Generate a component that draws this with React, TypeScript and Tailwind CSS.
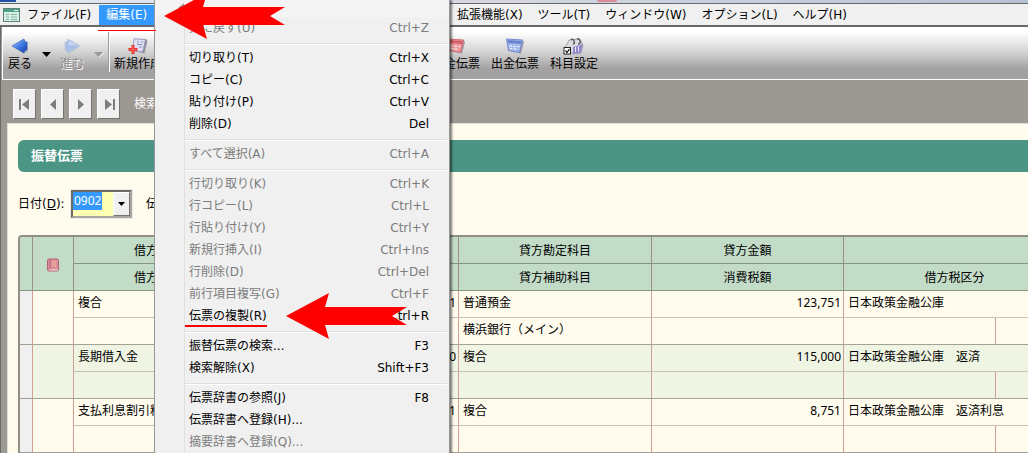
import type { ReactNode } from 'react';

type MenuEntry = { label: string; keys?: string; disabled?: boolean };

const editMenu: MenuEntry[][] = [
  [{ label: '元に戻す(U)', keys: 'Ctrl+Z', disabled: true }],
  [
    { label: '切り取り(T)', keys: 'Ctrl+X' },
    { label: 'コピー(C)', keys: 'Ctrl+C' },
    { label: '貼り付け(P)', keys: 'Ctrl+V' },
    { label: '削除(D)', keys: 'Del' },
  ],
  [{ label: 'すべて選択(A)', keys: 'Ctrl+A', disabled: true }],
  [
    { label: '行切り取り(K)', keys: 'Ctrl+K', disabled: true },
    { label: '行コピー(L)', keys: 'Ctrl+L', disabled: true },
    { label: '行貼り付け(Y)', keys: 'Ctrl+Y', disabled: true },
    { label: '新規行挿入(I)', keys: 'Ctrl+Ins', disabled: true },
    { label: '行削除(D)', keys: 'Ctrl+Del', disabled: true },
    { label: '前行項目複写(G)', keys: 'Ctrl+F', disabled: true },
    { label: '伝票の複製(R)', keys: 'Ctrl+R' },
  ],
  [
    { label: '振替伝票の検索...', keys: 'F3' },
    { label: '検索解除(X)', keys: 'Shift+F3' },
  ],
  [
    { label: '伝票辞書の参照(J)', keys: 'F8' },
    { label: '伝票辞書へ登録(H)...' },
    { label: '摘要辞書へ登録(Q)...', disabled: true },
  ],
];

const rows = [
  { debit: '複合', amount: '123,751', credit: '普通預金', sub: '横浜銀行（メイン）', note: '日本政策金融公庫' },
  { debit: '長期借入金', amount: '115,000', credit: '複合', sub: '', note: '日本政策金融公庫　返済' },
  { debit: '支払利息割引料', amount: '8,751', credit: '複合', sub: '', note: '日本政策金融公庫　返済利息' },
];

function RedArrow({ className }: { className: string }) {
  return (
    <svg className={className} width="122" height="46" viewBox="0 0 122 46" aria-hidden="true">
      <path d="M0 23 L43 0 L39 14 H121 L106 23 L121 32 H39 L43 46 Z" fill="#fe0000" />
    </svg>
  );
}

function BackIcon() {
  return (
    <svg width="18" height="16" viewBox="0 0 18 16" aria-hidden="true">
      <defs>
        <linearGradient id="back" x1="0" y1="0" x2="1" y2="1">
          <stop offset="0" stopColor="#b9d6ff" />
          <stop offset="0.5" stopColor="#3f7ce6" />
          <stop offset="1" stopColor="#1538a0" />
        </linearGradient>
      </defs>
      <path d="M3 9 L13 16 L17 13 V4 L15 3 Z" fill="#9aa0b0" opacity="0.6" />
      <path d="M1 8 L13 1 L14 4 L16 4 V12 L14 12.5 L13 15 Z" fill="url(#back)" stroke="#3563c4" strokeWidth="0.7" />
    </svg>
  );
}

function ForwardIcon() {
  return (
    <svg width="18" height="16" viewBox="0 0 18 16" aria-hidden="true">
      <path d="M16 9 L6 16 L2 13 L5 12 Z" fill="#b9b9bd" opacity="0.6" />
      <path d="M17 8 L5 1 L4 4 L2 4 V12 L4 12.5 L5 15 Z" fill="#a9bfe6" stroke="#b9c3d8" strokeWidth="0.7" />
      <path d="M15 7.5 L6 3 V7 Z" fill="#c8d8f4" />
    </svg>
  );
}

function SlipIcon({ color, light }: { color: string; light: string }) {
  return (
    <svg width="20" height="16" viewBox="0 0 20 16" aria-hidden="true">
      <path d="M4 2 L18 2.5 L19 4 L16 16 L14 15 L5 13 Z" fill="#a29fa6" />
      <path d="M1.500 1 L17.500 2 L14.500 14.500 L3.500 12.500 Z" fill={light} stroke={color} strokeWidth="0.9" />
      <path d="M2.500 2 L16.500 3 L16 6 L3 5 Z" fill={color} />
      <path d="M4.500 8 h2.500 M8.500 8.300 h2.500 M12.500 8.600 h2 M5 10.700 h2.500 M8.800 11 h2.500" stroke="#fff" strokeWidth="1" />
    </svg>
  );
}

function NewIcon() {
  return (
    <svg width="20" height="16" viewBox="0 0 20 16" aria-hidden="true">
      <path d="M6 1 L18 1 L19.500 3 L16.500 15.500 L6 13 Z" fill="#93939f" />
      <path d="M6 0.700 L17.500 1.500 L14.500 14 L4.500 12.500 Z" fill="#dfe1f2" stroke="#8f92b8" strokeWidth="0.8" />
      <path d="M9 4 h2 M13 4 h2 M9 6.500 h5 M11 9 h3" stroke="#8a90c4" />
      <path d="M5 7 V16 M0.500 11.500 H9.500" stroke="#e8322c" strokeWidth="3" />
      <path d="M5 8 V15 M1.500 11.500 H8.500" stroke="#fa6a5e" strokeWidth="1" />
    </svg>
  );
}

function SettingsIcon() {
  return (
    <svg width="22" height="17" viewBox="0 0 22 17" aria-hidden="true">
      <path d="M2 10 L6 2 L17 1 L20 7 L18 15 L10 16 Z" fill="#dddbe2" stroke="#94929c" strokeWidth="0.8" />
      <path d="M10 9 L20 6 L18 14.500 L10 16 Z" fill="#9089cc" />
      <path d="M8 2 q2 -2 3 1 t-1 3 M14 1 q2 -1 3 2 t-2 3" stroke="#4d4b52" fill="none" strokeWidth="1.300" />
      <path d="M12.500 9 v5 M15.500 8.500 v5" stroke="#e9e6ff" />
      <rect x="1" y="9.500" width="6.500" height="6.500" fill="#fff" stroke="#222" />
      <path d="M2.500 12.500 L4 14.500 L6.500 11" stroke="#000" fill="none" strokeWidth="1.200" />
    </svg>
  );
}

function ToolButton({ label, children, disabled }: { label: string; children: ReactNode; disabled?: boolean }) {
  return (
    <button
      disabled={disabled}
      className="flex flex-col items-center whitespace-nowrap disabled:text-[#8d8b8c] disabled:[text-shadow:1px_1px_0_#fff]"
    >
      <span className="flex h-5 items-center">{children}</span>
      <span className="leading-4">{label}</span>
    </button>
  );
}

const navButtons = [
  { label: '先頭', d: 'M2 3 V14 H4 V3 Z M12 3 V14 L5 8.5 Z' },
  { label: '前へ', d: 'M11 3 V14 L5 8.5 Z' },
  { label: '次へ', d: 'M5 3 V14 L11 8.5 Z' },
  { label: '末尾', d: 'M14 3 V14 H12 V3 Z M4 3 V14 L11 8.5 Z' },
];

const th = 'border-r border-b border-r-[#9a8f80] border-b-[#87957f] bg-[#c3dcc8] p-0 pt-0.5 text-center font-normal';
const tdTop = 'border-r border-b border-r-[#d2a093] border-b-[#c6c2b4] p-0 px-1 pb-0.5';
const tdBottom = 'border-r border-b border-r-[#d2a093] border-b-[#a3a194] p-0 px-1 pb-0.5';

function VoucherTable() {
  return (
    <div className="overflow-hidden rounded-tl border-t-2 border-l-2 border-[#908f87]">
      <table className="w-[1268px] table-fixed border-separate border-spacing-0 whitespace-nowrap">
        <colgroup>
          <col className="w-[13px]" />
          <col className="w-[41px]" />
          <col className="w-[193px]" />
          <col className="w-[192px]" />
          <col className="w-[193px]" />
          <col className="w-[192px]" />
          <col className="w-[152px]" />
          <col className="w-[70px]" />
          <col className="w-[222px]" />
        </colgroup>
        <thead>
          <tr className="h-[27px]">
            <th rowSpan={2} className={th} />
            <th rowSpan={2} className={th}>
              <svg className="mx-auto" width="14" height="14" viewBox="0 0 14 14" aria-hidden="true">
                <rect x="1.5" y="1" width="11" height="12" rx="1.5" fill="#dc8f9b" stroke="#b4616f" />
                <path d="M4 1 V13" stroke="#b4616f" />
                <path d="M6 4 h1 M9 4 h1 M7 6 h2 M6 8 h1 M9 8 h1" stroke="#f7dd7a" />
                <path d="M3 12 H12" stroke="#f3dede" />
              </svg>
            </th>
            <th className={th}>借方勘定科目</th>
            <th className={th}>借方金額</th>
            <th className={th}>貸方勘定科目</th>
            <th className={th}>貸方金額</th>
            <th colSpan={3} className={th} />
          </tr>
          <tr className="h-[27px]">
            <th className={th}>借方補助科目</th>
            <th className={th}>消費税額</th>
            <th className={th}>貸方補助科目</th>
            <th className={th}>消費税額</th>
            <th colSpan={2} className={th}>借方税区分</th>
            <th className={th} />
          </tr>
        </thead>
        {rows.map((row, i) => (
          <tbody key={i} className={i % 2 ? 'bg-[#eff4e3]' : 'bg-[#fffbed]'}>
            <tr className="h-[27px]">
              <td rowSpan={2} className="border-r border-b border-r-[#d2a093] border-b-[#a3a194] bg-[#f0f0f0] p-0" />
              <td rowSpan={2} className={tdBottom} />
              <td className={tdTop}>{row.debit}</td>
              <td className={`${tdTop} pr-0.5 text-right font-['Noto_Sans']`}>{row.amount}</td>
              <td className={tdTop}>{row.credit}</td>
              <td className={`${tdTop} pr-0.5 text-right font-['Noto_Sans']`}>{row.amount}</td>
              <td colSpan={3} className={tdTop}>{row.note}</td>
            </tr>
            <tr className="h-[27px]">
              <td className={tdBottom} />
              <td className={tdBottom} />
              <td className={tdBottom}>{row.sub}</td>
              <td className={tdBottom} />
              <td className={tdBottom} />
              <td colSpan={2} className={tdBottom} />
            </tr>
          </tbody>
        ))}
      </table>
    </div>
  );
}

function EditMenu() {
  return (
    <div
      role="menu"
      className="absolute top-0 bottom-0 left-[154px] w-[296px] overflow-hidden border-r border-l border-[#979797] bg-[#f0f0f0] shadow-[2px_0_2px_rgba(0,0,0,0.5)]"
    >
      <div className="flex h-[17px] bg-[#f4f4f4] pl-[23px]">
        <svg width="12" height="8" viewBox="0 0 12 8" aria-hidden="true">
          <path d="M0 8 L6 3 V8 Z" fill="#9a9a9a" />
        </svg>
      </div>
      <div className="ml-[29px] border-l border-[#e0e0e0]">
        {editMenu.map((group, g) => (
          <div key={g}>
            {g > 0 && <div className="mt-1 mr-0.5 mb-0.5 h-0.5 border-b border-white bg-[#dfdfdf]" />}
            {group.map(item => (
              <button
                key={item.label}
                role="menuitem"
                disabled={item.disabled}
                className="flex h-[22px] w-full items-center justify-between pr-5 pl-1 disabled:text-[#7c7c7c]"
              >
                <span>{item.label}</span>
                <span>{item.keys}</span>
              </button>
            ))}
          </div>
        ))}
      </div>
    </div>
  );
}

export default function App() {
  return (
    <div className="bg-white">
      <div className="relative overflow-hidden bg-[#9c9892] font-['DejaVu_Sans','Noto_Sans_CJK_JP',sans-serif] text-[12px] leading-4 text-black">
        <div className="flex h-[3px] bg-gradient-to-r from-[#e4e8f0] via-[#d4d7e2] to-[#b7c2d5]">
          <div className="h-0.5 w-[457px] shrink-0">
            <div className="h-full w-4 bg-[#2350a0]" />
          </div>
          <div className="ml-[140px] h-0.5 w-5 rounded-b-full bg-[#d98a98]" />
        </div>
        <nav className="flex h-6 items-center border-t border-b-2 border-[#66686c] bg-[#f0f0f0] whitespace-nowrap">
          <div className="flex w-[457px] shrink-0 items-center">
            <svg className="mr-1.5 ml-[3px] shrink-0" width="18" height="14" viewBox="0 0 18 14" aria-hidden="true">
              <rect x="0.5" y="0.5" width="16" height="13" fill="#d9f0e4" stroke="#5f7f78" />
              <rect x="1" y="1" width="15" height="3" fill="#4fa088" />
              <path d="M11 2.5 h4" stroke="#e4f3ea" />
              <path d="M3 6.5 h3 M8 6.5 h6 M3 9 h3 M8 9 h6 M3 11.5 h3 M8 11.5 h6" stroke="#7fb3a0" />
            </svg>
            <button>ファイル(F)</button>
            <button className="ml-2 h-5 bg-[#3399ff] px-[7px] text-white">編集(E)</button>
          </div>
          <div className="flex gap-[15px]">
            <button>拡張機能(X)</button>
            <button>ツール(T)</button>
            <button>ウィンドウ(W)</button>
            <button>オプション(L)</button>
            <button>ヘルプ(H)</button>
          </div>
        </nav>

        <div className="border-l border-[#66686c]">
          <div className="ml-px flex h-[53px] border-b border-l border-white bg-gradient-to-b from-white from-10% via-[#d2d1d2] via-50% to-[#a3a1a2] to-80% pt-[9px]">
            <div className="flex w-[429px] shrink-0 items-start pl-[5px]">
              <ToolButton label="戻る">
                <BackIcon />
              </ToolButton>
              <svg className="mt-4 mr-[9px] ml-2.5" width="9" height="5" viewBox="0 0 9 5" aria-hidden="true">
                <path d="M0 0 H9 L4.5 5 Z" fill="#000" />
              </svg>
              <ToolButton label="進む" disabled>
                <ForwardIcon />
              </ToolButton>
              <svg className="mt-4 mr-1 ml-2.5" width="10" height="6" viewBox="0 0 10 6" aria-hidden="true">
                <path d="M0 0 H9 L4.5 5 Z" fill="#9a9899" />
                <path d="M9.5 0.5 L5 5.5" stroke="#fff" />
              </svg>
              <div className="mr-1 -mt-1 h-10 border-r border-white bg-[#999] pl-px" />
              <ToolButton label="新規作成">
                <NewIcon />
              </ToolButton>
            </div>
            <div className="flex items-start gap-[11px]">
              <ToolButton label="入金伝票">
                <SlipIcon color="#d4606a" light="#ee9a9e" />
              </ToolButton>
              <ToolButton label="出金伝票">
                <SlipIcon color="#6a84cc" light="#a3b8ec" />
              </ToolButton>
              <ToolButton label="科目設定">
                <SettingsIcon />
              </ToolButton>
            </div>
          </div>

          <div className="flex h-[43px] items-center gap-[5px] pt-1 pl-3">
            {navButtons.map(({ label, d }) => (
              <button
                key={label}
                aria-label={label}
                className="flex h-[30px] w-[23px] items-center justify-center border border-t-white border-r-[#77746f] border-b-[#77746f] border-l-white bg-[#f0f0f0]"
              >
                <svg width="16" height="16" viewBox="0 0 16 16" aria-hidden="true">
                  <path d={d} fill="#7d7d7d" />
                </svg>
              </button>
            ))}
            <span className="ml-[9px] text-white">検索</span>
          </div>

          <main className="ml-1.5 border-t border-l border-[#deded9] bg-[#fffbed] pt-4 pl-2.5">
            <h1 className="flex h-8 items-center rounded-l-md bg-[#4b9584] pl-[13px] text-[13px] font-bold text-white">振替伝票</h1>
            <div className="flex h-[63px] items-center">
              <label htmlFor="date" className="w-[53px]">
                日付(<u>D</u>):
              </label>
              <div className="flex h-[28px] w-[61px] border-2 border-t-[#6d6a66] border-r-[#a9a69f] border-b-[#a9a69f] border-l-[#6d6a66] bg-[#ffffb4] ring-1 ring-[#ecebe6]">
                <div className="min-w-0 flex-1">
                  <input
                    id="date"
                    defaultValue="0902"
                    className="block h-[18px] w-[29px] bg-[#3399ff] pl-px font-['Noto_Sans'] text-[12px] text-white outline-none"
                  />
                </div>
                <button
                  aria-label="日付を選択"
                  className="flex w-[17px] items-center justify-center border border-t-white border-r-[#77746f] border-b-[#77746f] border-l-white bg-[#f0f0f0]"
                >
                  <svg width="7" height="4" viewBox="0 0 7 4" aria-hidden="true">
                    <path d="M0 0 H7 L3.5 4 Z" fill="#000" />
                  </svg>
                </button>
              </div>
              <span className="ml-3.5">伝票番号</span>
            </div>
            <VoucherTable />
          </main>
        </div>

        <EditMenu />
        <div className="absolute top-[30px] left-[98px] h-px w-[58px] bg-[#fe0000]" />
        <div className="absolute top-[325px] left-[185px] h-0.5 w-[82px] bg-[#fe0000]" />
        <RedArrow className="absolute -top-[7px] left-[164px]" />
        <RedArrow className="absolute top-[293px] left-[286px]" />
      </div>
    </div>
  );
}
